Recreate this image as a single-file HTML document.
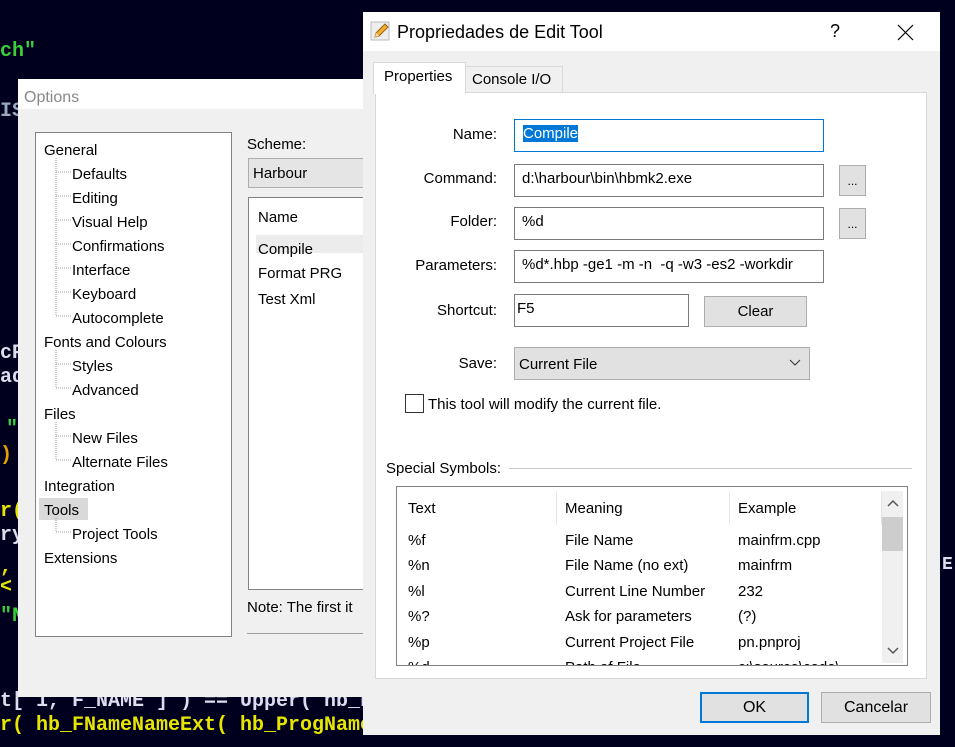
<!DOCTYPE html>
<html><head><meta charset="utf-8"><style>
body{margin:0;width:955px;height:747px;background:#00001e;position:relative;overflow:hidden;font-family:"Liberation Sans",sans-serif;font-size:15px;color:#000}
.a{position:absolute}
.code{font-family:"Liberation Mono",monospace;font-weight:bold;font-size:20px;color:#e6e600;white-space:pre}
.tree div{position:absolute;left:0;white-space:nowrap}
.in{position:absolute;background:#fff;border:1px solid #7a7a7a;box-sizing:border-box;padding:5px 0 0 7px;white-space:nowrap;overflow:hidden}
.btn{position:absolute;background:#e1e1e1;border:1px solid #adadad;box-sizing:border-box;text-align:center}
.lbl{position:absolute;text-align:right;width:120px}
.row{position:absolute;left:0;width:480px;height:25px}
.row span{position:absolute}
</style></head><body>
<div class="a code" style="left:0;top:40px;color:#3ad13a">ch"</div>
<div class="a code" style="left:0;top:100px;color:#9ab">IS</div>
<div class="a code" style="left:0;top:342px;color:#dde">cP</div>
<div class="a code" style="left:0;top:366px;color:#dde">ad</div>
<div class="a code" style="left:6px;top:418px;color:#3ad13a">"</div>
<div class="a code" style="left:0;top:444px;color:#e6a000">)</div>
<div class="a code" style="left:0;top:500px">r(</div>
<div class="a code" style="left:0;top:524px;color:#dde">ry</div>
<div class="a code" style="left:0;top:556px">,</div>
<div class="a code" style="left:0;top:576px">&lt;</div>
<div class="a code" style="left:0;top:605px;color:#3ad13a">"N</div>
<div class="a code" style="left:942px;top:555px;color:#dde;font-size:18px">E</div>
<div class="a code" style="left:0;top:690px;color:#dde">t[ 1, F_NAME ] ) == Upper( hb_F</div>
<div class="a code" style="left:0;top:714px">r( hb_FNameNameExt( hb_ProgName() ) )</div>

<!-- Options dialog -->
<div class="a" style="left:18px;top:79px;width:345px;height:618px;background:#f0f0f0"></div>
<div class="a" style="left:18px;top:79px;width:345px;height:30px;background:#fff"></div>
<div class="a" style="left:24px;top:89px;color:#888;font-size:16px">Options</div>
<div class="a" style="left:35px;top:132px;width:195px;height:503px;background:#fff;border:1px solid #828282"></div>
<div class="a tree" style="left:44px;top:139px;line-height:24px">
<div style="top:0">General</div>
<div style="top:24px;left:28px">Defaults</div>
<div style="top:48px;left:28px">Editing</div>
<div style="top:72px;left:28px">Visual Help</div>
<div style="top:96px;left:28px">Confirmations</div>
<div style="top:120px;left:28px">Interface</div>
<div style="top:144px;left:28px">Keyboard</div>
<div style="top:168px;left:28px">Autocomplete</div>
<div style="top:192px">Fonts and Colours</div>
<div style="top:216px;left:28px">Styles</div>
<div style="top:240px;left:28px">Advanced</div>
<div style="top:264px">Files</div>
<div style="top:288px;left:28px">New Files</div>
<div style="top:312px;left:28px">Alternate Files</div>
<div style="top:336px">Integration</div>
<div style="top:359px;left:-5px;width:49px;height:22px;background:#d9d9d9"></div>
<div style="top:360px">Tools</div>
<div style="top:384px;left:28px">Project Tools</div>
<div style="top:408px">Extensions</div>
</div>
<svg class="a" style="left:55px;top:150px" width="20" height="420"><g stroke="#999" stroke-dasharray="1,1" fill="none">
<path d="M1 8V166M1 22H16M1 46H16M1 70H16M1 94H16M1 118H16M1 142H16M1 166H16"/>
<path d="M1 200V238M1 214H16M1 238H16"/>
<path d="M1 272V310M1 286H16M1 310H16"/>
<path d="M1 368V382M1 382H16"/></g></svg>
<div class="a" style="left:247px;top:136px">Scheme:</div>
<div class="a" style="left:248px;top:158px;width:120px;height:30px;background:#e5e5e5;border:1px solid #adadad;box-sizing:border-box"></div>
<div class="a" style="left:253px;top:165px">Harbour</div>
<div class="a" style="left:248px;top:197px;width:120px;height:393px;background:#fff;border:1px solid #828282;box-sizing:border-box"></div>
<div class="a" style="left:258px;top:209px">Name</div>
<div class="a" style="left:256px;top:235px;width:110px;height:18px;background:#ececec"></div>
<div class="a" style="left:258px;top:241px">Compile</div>
<div class="a" style="left:258px;top:265px">Format PRG</div>
<div class="a" style="left:258px;top:291px">Test Xml</div>
<div class="a" style="left:247px;top:599px">Note: The first it</div>
<div class="a" style="left:247px;top:633px;width:120px;height:1px;background:#a0a0a0"></div>

<!-- Properties dialog -->
<div class="a" style="left:363px;top:12px;width:577px;height:723px;background:#f0f0f0"></div>
<div class="a" style="left:363px;top:12px;width:577px;height:39px;background:#fff"></div>
<svg class="a" style="left:370px;top:20px" width="22" height="22"><rect x="1" y="2" width="18" height="18" fill="#eee" stroke="#bbb"/><path d="M5 17l1-4 9-9 3 3-9 9z" fill="#f0b030" stroke="#a06010"/><path d="M5 17l1-4 3 3z" fill="#f5deb3"/></svg>
<div class="a" style="left:397px;top:22px;font-size:18px">Propriedades de Edit Tool</div>
<div class="a" style="left:830px;top:21px;font-size:18px">?</div>
<svg class="a" style="left:897px;top:24px" width="18" height="18"><path d="M1 1L16 16M16 1L1 16" stroke="#000" stroke-width="1.2"/></svg>
<div class="a" style="left:375px;top:92px;width:552px;height:587px;background:#fff;border:1px solid #d9d9d9;box-sizing:border-box"></div>
<div class="a" style="left:465px;top:66px;width:98px;height:27px;background:#f0f0f0;border:1px solid #d9d9d9;box-sizing:border-box"></div>
<div class="a" style="left:472px;top:71px">Console I/O</div>
<div class="a" style="left:373px;top:62px;width:93px;height:32px;background:#fff;border:1px solid #d9d9d9;border-bottom:none;box-sizing:border-box"></div>
<div class="a" style="left:384px;top:68px">Properties</div>

<div class="lbl" style="left:377px;top:126px">Name:</div>
<div class="lbl" style="left:377px;top:170px">Command:</div>
<div class="lbl" style="left:377px;top:213px">Folder:</div>
<div class="lbl" style="left:377px;top:257px">Parameters:</div>
<div class="lbl" style="left:377px;top:302px">Shortcut:</div>
<div class="lbl" style="left:377px;top:355px">Save:</div>
<div class="in" style="left:514px;top:119px;width:310px;height:33px;border-color:#0078d7;padding-left:8px"><span style="background:#0078d7;color:#fff">Compile</span></div>
<div class="in" style="left:514px;top:164px;width:310px;height:33px">d:\harbour\bin\hbmk2.exe</div>
<div class="in" style="left:514px;top:207px;width:310px;height:33px">%d</div>
<div class="in" style="left:514px;top:250px;width:310px;height:33px">%d*.hbp -ge1 -m -n &nbsp;-q -w3 -es2 -workdir</div>
<div class="in" style="left:514px;top:294px;width:175px;height:33px;padding-left:2px">F5</div>
<div class="btn" style="left:704px;top:296px;width:103px;height:31px;padding-top:6px">Clear</div>
<div class="btn" style="left:839px;top:165px;width:27px;height:31px;padding-top:8px;font-size:12px">...</div>
<div class="btn" style="left:839px;top:208px;width:27px;height:31px;padding-top:8px;font-size:12px">...</div>
<div class="btn" style="left:514px;top:347px;width:296px;height:33px;text-align:left;padding:8px 0 0 4px">Current File</div>
<svg class="a" style="left:789px;top:359px" width="12" height="8"><path d="M1 1l5 5 5-5" stroke="#333" fill="none"/></svg>
<div class="a" style="left:405px;top:394px;width:19px;height:19px;background:#fff;border:1px solid #333;box-sizing:border-box"></div>
<div class="a" style="left:428px;top:396px">This tool will modify the current file.</div>
<div class="a" style="left:386px;top:460px">Special Symbols:</div>
<div class="a" style="left:509px;top:468px;width:403px;height:1px;background:#c8c8c8"></div>
<div class="a" style="left:396px;top:486px;width:512px;height:180px;background:#fff;border:1px solid #828282;box-sizing:border-box;overflow:hidden">
 <div class="a" style="left:159px;top:4px;width:1px;height:34px;background:#e5e5e5"></div>
 <div class="a" style="left:332px;top:4px;width:1px;height:34px;background:#e5e5e5"></div>
 <div class="a" style="left:484px;top:4px;width:1px;height:34px;background:#e5e5e5"></div>
 <div class="row" style="top:13px"><span style="left:11px">Text</span><span style="left:168px">Meaning</span><span style="left:341px">Example</span></div>
 <div class="row" style="top:45px"><span style="left:11px">%f</span><span style="left:168px">File Name</span><span style="left:341px">mainfrm.cpp</span></div>
 <div class="row" style="top:70px"><span style="left:11px">%n</span><span style="left:168px">File Name (no ext)</span><span style="left:341px">mainfrm</span></div>
 <div class="row" style="top:96px"><span style="left:11px">%l</span><span style="left:168px">Current Line Number</span><span style="left:341px">232</span></div>
 <div class="row" style="top:121px"><span style="left:11px">%?</span><span style="left:168px">Ask for parameters</span><span style="left:341px">(?)</span></div>
 <div class="row" style="top:147px"><span style="left:11px">%p</span><span style="left:168px">Current Project File</span><span style="left:341px">pn.pnproj</span></div>
 <div class="row" style="top:172px"><span style="left:11px">%d</span><span style="left:168px">Path of File</span><span style="left:341px">c:\source\code\</span></div>
 <div class="a" style="left:485px;top:4px;width:21px;height:172px;background:#f0f0f0"></div>
 <div class="a" style="left:485px;top:30px;width:21px;height:34px;background:#cdcdcd"></div>
 <svg class="a" style="left:490px;top:12px" width="12" height="8"><path d="M1 7l5-5 5 5" stroke="#555" stroke-width="1.5" fill="none"/></svg>
 <svg class="a" style="left:490px;top:160px" width="12" height="8"><path d="M1 1l5 5 5-5" stroke="#555" stroke-width="1.5" fill="none"/></svg>
</div>
<div class="btn" style="left:700px;top:692px;width:109px;height:31px;border:2px solid #0078d7;padding-top:5px;font-size:16px">OK</div>
<div class="btn" style="left:821px;top:692px;width:110px;height:31px;padding-top:6px;font-size:16px">Cancelar</div>
</body></html>
